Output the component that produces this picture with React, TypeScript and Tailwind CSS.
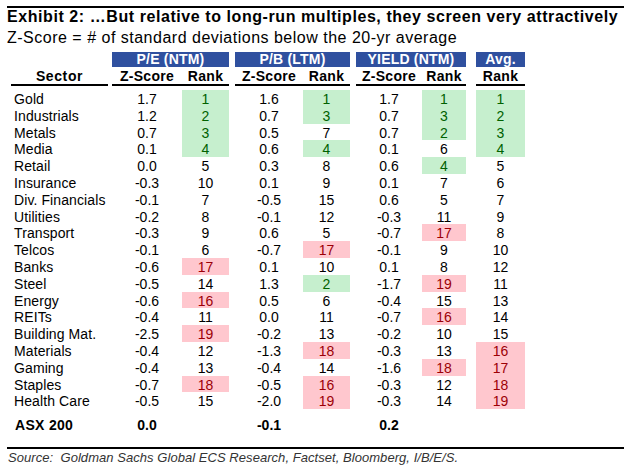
import React from 'react'

type Row = [string, string, number, string, number, string, number, number]

// sector, pe z, pe rank, pb z, pb rank, yield z, yield rank, avg rank
const rows: Row[] = [
    ['Gold', '1.7', 1, '1.6', 1, '1.7', 1, 1],
    ['Industrials', '1.2', 2, '0.7', 3, '0.7', 3, 2],
    ['Metals', '0.7', 3, '0.5', 7, '0.7', 2, 3],
    ['Media', '0.1', 4, '0.6', 4, '0.1', 6, 4],
    ['Retail', '0.0', 5, '0.3', 8, '0.6', 4, 5],
    ['Insurance', '-0.3', 10, '0.1', 9, '0.1', 7, 6],
    ['Div. Financials', '-0.1', 7, '-0.5', 15, '0.6', 5, 7],
    ['Utilities', '-0.2', 8, '-0.1', 12, '-0.3', 11, 9],
    ['Transport', '-0.3', 9, '0.6', 5, '-0.7', 17, 8],
    ['Telcos', '-0.1', 6, '-0.7', 17, '-0.1', 9, 10],
    ['Banks', '-0.6', 17, '0.1', 10, '0.1', 8, 12],
    ['Steel', '-0.5', 14, '1.3', 2, '-1.7', 19, 11],
    ['Energy', '-0.6', 16, '0.5', 6, '-0.4', 15, 13],
    ['REITs', '-0.4', 11, '0.0', 11, '-0.7', 16, 14],
    ['Building Mat.', '-2.5', 19, '-0.2', 13, '-0.2', 10, 15],
    ['Materials', '-0.4', 12, '-1.3', 18, '-0.3', 13, 16],
    ['Gaming', '-0.4', 13, '-0.4', 14, '-1.6', 18, 17],
    ['Staples', '-0.7', 18, '-0.5', 16, '-0.3', 12, 18],
    ['Health Care', '-0.5', 15, '-2.0', 19, '-0.3', 14, 19],
]

const rankClass = (r: number) =>
    r <= 4 ? 'bg-[#c6efce] text-[#006100]' : r >= 16 ? 'bg-[#ffc7ce] text-[#9c0006]' : ''

const cell = 'h-[16.8px] leading-[18px] text-center'

const RankCell = ({ r, w }: { r: number; w: string }) => (
    <div className={`${cell} ${w} ${rankClass(r)}`}>{r}</div>
)

const App = () => {
    return (
        <div
            className="w-[624px] h-[470px] bg-white text-black overflow-hidden pt-[6px]"
            style={{ fontFamily: '"Liberation Sans", Arial, sans-serif' }}
        >
            <div className="ml-[7px] h-[2px] bg-black" />
            <div className="ml-[7px] text-[16px] font-bold leading-[18px] tracking-[0.57px] whitespace-nowrap">
                Exhibit 2: …But relative to long-run multiples, they screen very attractively
            </div>
            <div className="ml-[7px] mt-[2px] text-[16px] leading-[20px] tracking-[0.5px] whitespace-nowrap">
                Z-Score = # of standard deviations below the 20-yr average
            </div>

            {/* group bars */}
            <div className="flex mt-[4px] h-[15px] text-[14px] font-bold leading-[15px] tracking-[0.2px] text-white">
                <div className="ml-[11px] w-[97px]" />
                <div className="w-[4px]" />
                <div className="w-[117px] bg-[#2f509f] text-center">P/E (NTM)</div>
                <div className="w-[6px]" />
                <div className="w-[115px] bg-[#2f509f] text-center">P/B (LTM)</div>
                <div className="w-[6px]" />
                <div className="w-[110px] bg-[#2f509f] text-center">YIELD (NTM)</div>
                <div className="w-[10px]" />
                <div className="w-[49px] bg-[#2f509f] text-center">Avg.</div>
            </div>

            {/* column heads */}
            <div className="flex h-[17px] text-[14px] font-bold leading-[19px] tracking-[0.3px] text-center">
                <div className="ml-[11px] w-[97px] tracking-[0.6px]">Sector</div>
                <div className="w-[4px]" />
                <div className="w-[70px]">Z-Score</div>
                <div className="w-[47px]">Rank</div>
                <div className="w-[6px]" />
                <div className="w-[68px]">Z-Score</div>
                <div className="w-[47px]">Rank</div>
                <div className="w-[6px]" />
                <div className="w-[66px]">Z-Score</div>
                <div className="w-[44px]">Rank</div>
                <div className="w-[10px]" />
                <div className="w-[49px]">Rank</div>
            </div>
            <div className="flex h-[2px]">
                <div className="ml-[11px] w-[97px] bg-black" />
                <div className="w-[4px]" />
                <div className="w-[117px] bg-black" />
                <div className="w-[6px]" />
                <div className="w-[115px] bg-black" />
                <div className="w-[6px]" />
                <div className="w-[110px] bg-black" />
                <div className="w-[10px]" />
                <div className="w-[49px] bg-black" />
            </div>

            {/* data */}
            <div className="mt-[4px] text-[14px]">
                {rows.map((r) => (
                    <div className="flex" key={r[0]}>
                        <div className={`${cell} ml-[11px] w-[97px] pl-[3px] text-left whitespace-nowrap tracking-[0.1px]`}>{r[0]}</div>
                        <div className="w-[4px]" />
                        <div className={`${cell} w-[70px]`}>{r[1]}</div>
                        <RankCell r={r[2]} w="w-[47px]" />
                        <div className="w-[6px]" />
                        <div className={`${cell} w-[68px]`}>{r[3]}</div>
                        <RankCell r={r[4]} w="w-[47px]" />
                        <div className="w-[6px]" />
                        <div className={`${cell} w-[66px]`}>{r[5]}</div>
                        <RankCell r={r[6]} w="w-[44px]" />
                        <div className="w-[10px]" />
                        <RankCell r={r[7]} w="w-[49px]" />
                    </div>
                ))}
            </div>

            <div className="flex mt-[7px] text-[14px] font-bold">
                <div className={`${cell} ml-[11px] w-[97px] pl-[4px] text-left tracking-[0.3px]`}>ASX 200</div>
                <div className="w-[4px]" />
                <div className={`${cell} w-[70px]`}>0.0</div>
                <div className="w-[47px]" />
                <div className="w-[6px]" />
                <div className={`${cell} w-[68px]`}>-0.1</div>
                <div className="w-[47px]" />
                <div className="w-[6px]" />
                <div className={`${cell} w-[66px]`}>0.2</div>
            </div>

            <div className="ml-[7px] mt-[14px] h-[2px] bg-black" />
            <div className="ml-[8px] mt-[1px] text-[13px] italic leading-[15px] text-[#333] whitespace-pre tracking-[0.05px]">
                {'Source:  Goldman Sachs Global ECS Research, Factset, Bloomberg, I/B/E/S.'}
            </div>
        </div>
    )
}

export default App
